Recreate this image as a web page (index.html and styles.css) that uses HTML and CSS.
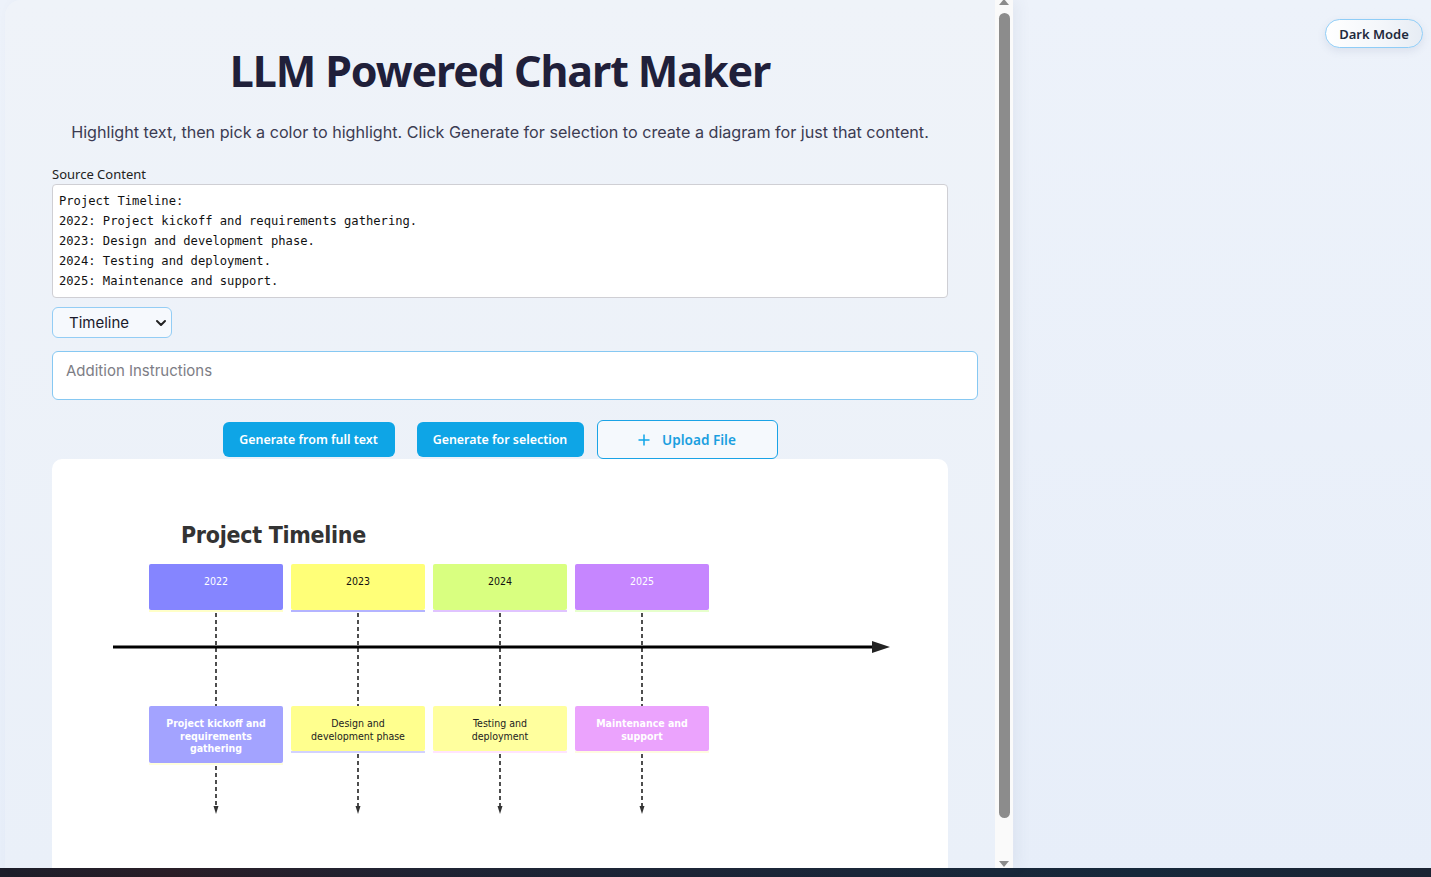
FILE: index.html
```html
<!DOCTYPE html>
<html>
<head>
<meta charset="utf-8">
<title>LLM Powered Chart Maker</title>
<link rel="stylesheet" href="styles.css">
</head>
<body>
<div class="app">
  <div class="panel">
    <main class="content">
      <h1 class="title">LLM Powered Chart Maker</h1>
      <p class="subtitle">Highlight text, then pick a color to highlight. Click Generate for selection to create a diagram for just that content.</p>
      <label class="field-label">Source Content</label>
      <div class="source">Project Timeline:
2022: Project kickoff and requirements gathering.
2023: Design and development phase.
2024: Testing and deployment.
2025: Maintenance and support.</div>
      <div class="select">
        <span>Timeline</span>
        <svg class="chev" width="12" height="8" viewBox="0 0 12 8"><path d="M2 2 L6 6 L10 2" fill="none" stroke="#222" stroke-width="2" stroke-linecap="round" stroke-linejoin="round"/></svg>
      </div>
      <div class="instructions">Addition Instructions</div>
      <div class="actions">
        <button class="btn primary btn-full">Generate from full text</button>
        <button class="btn primary btn-sel">Generate for selection</button>
        <button class="btn outline">
          <svg width="12" height="12" viewBox="0 0 12 12"><path d="M6 0.5 V11.5 M0.5 6 H11.5" stroke="#0ea5e9" stroke-width="1.5"/></svg>
          <span>Upload File</span>
        </button>
      </div>
      <section class="chart">
        <svg class="timeline" width="896" height="420" viewBox="0 0 896 420">
          <text x="129" y="84" class="t-title">Project Timeline</text>
          <!-- year boxes -->
          <rect x="97" y="151" width="134" height="2" fill="#ffffc8"/>
          <rect x="97" y="105" width="134" height="46" rx="2" fill="#8585ff"/>
          <text x="164" y="126" class="t-year light">2022</text>

          <rect x="239" y="151" width="134" height="2" fill="#b4b4ff"/>
          <rect x="239" y="105" width="134" height="46" rx="2" fill="#ffff78"/>
          <text x="306" y="126" class="t-year">2023</text>

          <rect x="381" y="151" width="134" height="2" fill="#e0c4ff"/>
          <rect x="381" y="105" width="134" height="46" rx="2" fill="#d9ff80"/>
          <text x="448" y="126" class="t-year">2024</text>

          <rect x="523" y="151" width="134" height="2" fill="#e6ffcc"/>
          <rect x="523" y="105" width="134" height="46" rx="2" fill="#c686ff"/>
          <text x="590" y="126" class="t-year light">2025</text>

          <!-- dashed lines -->
          <g stroke="#222" stroke-width="1.6" stroke-dasharray="4 3">
            <line x1="164" y1="154" x2="164" y2="247"/>
            <line x1="306" y1="154" x2="306" y2="247"/>
            <line x1="448" y1="154" x2="448" y2="247"/>
            <line x1="590" y1="154" x2="590" y2="247"/>
            <line x1="164" y1="307" x2="164" y2="349"/>
            <line x1="306" y1="295" x2="306" y2="349"/>
            <line x1="448" y1="295" x2="448" y2="349"/>
            <line x1="590" y1="295" x2="590" y2="349"/>
          </g>
          <g fill="#333">
            <path d="M161.5 347 L166.5 347 L164 355 Z"/>
            <path d="M303.5 347 L308.5 347 L306 355 Z"/>
            <path d="M445.5 347 L450.5 347 L448 355 Z"/>
            <path d="M587.5 347 L592.5 347 L590 355 Z"/>
          </g>

          <!-- axis -->
          <line x1="61" y1="188" x2="824" y2="188" stroke="#000" stroke-width="3"/>
          <path d="M820 182 L838 188 L820 194 Z" fill="#222"/>

          <!-- event boxes -->
          <rect x="97" y="304" width="134" height="2" fill="#ffffdc"/>
          <rect x="97" y="247" width="134" height="57" rx="2" fill="#a3a3ff"/>
          <text class="t-event light" x="164" y="268">Project kickoff and</text>
          <text class="t-event light" x="164" y="281">requirements</text>
          <text class="t-event light" x="164" y="293">gathering</text>

          <rect x="239" y="292" width="134" height="2" fill="#d2d2ff"/>
          <rect x="239" y="247" width="134" height="45" rx="2" fill="#ffff8e"/>
          <text class="t-event" x="306" y="268">Design and</text>
          <text class="t-event" x="306" y="281">development phase</text>

          <rect x="381" y="292" width="134" height="2" fill="#ffe4ff"/>
          <rect x="381" y="247" width="134" height="45" rx="2" fill="#ffff9e"/>
          <text class="t-event" x="448" y="268">Testing and</text>
          <text class="t-event" x="448" y="281">deployment</text>

          <rect x="523" y="292" width="134" height="2" fill="#fffbe0"/>
          <rect x="523" y="247" width="134" height="45" rx="2" fill="#eba3fd"/>
          <text class="t-event light" x="590" y="268">Maintenance and</text>
          <text class="t-event light" x="590" y="281">support</text>
        </svg>
      </section>
    </main>
    <div class="scrollbar">
      <svg class="sb-up" width="12" height="6" viewBox="0 0 12 6"><path d="M1 6 L6 0 L11 6 Z" fill="#8c8c8c"/></svg>
      <div class="thumb"></div>
      <svg class="sb-down" width="12" height="6" viewBox="0 0 12 6"><path d="M1 0 L11 0 L6 6 Z" fill="#8c8c8c"/></svg>
    </div>
  </div>
  <div class="rest"></div>
</div>
<div class="bottom-bar"></div>
<button class="dark-toggle">Dark Mode</button>
</body>
</html>
```

FILE: styles.css
```css
html, body {
  margin: 0;
  padding: 0;
}
body {
  width: 1431px;
  height: 877px;
  overflow: hidden;
  background: linear-gradient(180deg, #edf2fa 0%, #e7eef9 100%);
  font-family: "Noto Sans", "Open Sans", sans-serif;
  position: relative;
}
.app {
  display: flex;
  height: 868px;
}
.panel {
  margin-left: 5px;
  width: 1008px;
  height: 868px;
  display: flex;
  flex-shrink: 0;
  background: linear-gradient(180deg, #eff3f9 0%, #eaf0f9 100%);
  border-radius: 16px 0 0 0;
  overflow: hidden;
  box-shadow: 6px 0 14px rgba(60, 80, 120, 0.06);
}
.content {
  width: 990px;
  height: 868px;
  padding: 0 47px;
  box-sizing: border-box;
  display: flex;
  flex-direction: column;
  align-items: flex-start;
  overflow: hidden;
}
.content > * {
  flex-shrink: 0;
}
.title {
  align-self: stretch;
  text-align: center;
  margin: 43px 0 0;
  font-family: "Noto Sans", sans-serif;
  font-weight: 700;
  font-size: 43px;
  line-height: 56px;
  color: #20203a;
  letter-spacing: -1.1px;
}
.subtitle {
  align-self: stretch;
  text-align: center;
  margin: 22px 0 0;
  font-family: "Inter", sans-serif;
  font-size: 16.15px;
  line-height: 22px;
  color: #3b3b52;
}
.field-label {
  margin-top: 23px;
  font-size: 13px;
  line-height: 17px;
  color: #222;
}
.source {
  margin-top: 1px;
  width: 896px;
  height: 114px;
  box-sizing: border-box;
  border: 1px solid #cfcfd4;
  border-radius: 4px;
  background: #fff;
  padding: 6px 6px;
  font-family: "DejaVu Sans Mono", "Liberation Mono", monospace;
  font-size: 12.15px;
  line-height: 20px;
  color: #111;
  white-space: pre;
}
.select {
  margin-top: 9px;
  width: 120px;
  height: 31px;
  box-sizing: border-box;
  border: 1px solid #93cdf5;
  border-radius: 6px;
  background: #f6f9fd;
  display: flex;
  align-items: center;
  justify-content: space-between;
  padding: 0 4px 0 16px;
  font-family: "Inter", sans-serif;
  font-size: 15px;
  color: #1a1a2a;
}
.chev { margin-top: 1px; }
.instructions {
  margin-top: 13px;
  width: 926px;
  height: 49px;
  box-sizing: border-box;
  border: 1px solid #86c8f2;
  border-radius: 6px;
  background: #fff;
  padding: 9px 13px;
  font-family: "Inter", sans-serif;
  font-size: 15px;
  line-height: 20px;
  color: #7d7d85;
}
.actions {
  align-self: stretch;
  margin-top: 20px;
  display: flex;
  justify-content: center;
  align-items: center;
  height: 39px;
}
.btn {
  font-family: "Noto Sans", sans-serif;
  font-weight: 600;
  font-size: 12.4px;
  border-radius: 6px;
  cursor: pointer;
  box-sizing: border-box;
  white-space: nowrap;
  flex-shrink: 0;
}
.primary {
  height: 35px;
  background: #0ea5e6;
  color: #fff;
  border: none;
  padding: 0;
}
.btn-full { width: 172px; }
.btn-sel { width: 167px; margin-left: 22px; }
.outline {
  margin-left: 13px;
  width: 181px;
  height: 39px;
  background: #f5f9fd;
  border: 1px solid #1aa3e6;
  color: #1a9fe0;
  font-size: 13.6px;
  display: flex;
  align-items: center;
  justify-content: center;
  gap: 12px;
  padding-left: 6px;
}
.chart {
  width: 896px;
  height: 430px;
  background: #fff;
  border-radius: 10px 10px 0 0;
}
.timeline { display: block; }
.t-title {
  font-family: "DejaVu Sans Condensed", "DejaVu Sans", sans-serif;
  font-weight: 700;
  font-size: 23px;
  letter-spacing: -0.3px;
  fill: #333;
}
.t-year {
  font-family: "DejaVu Sans Condensed", "DejaVu Sans", sans-serif;
  font-size: 10.5px;
  text-anchor: middle;
  fill: #111;
}
.t-event {
  font-family: "DejaVu Sans Condensed", "DejaVu Sans", sans-serif;
  font-size: 10.5px;
  text-anchor: middle;
  fill: #222;
}
.t-event.light { fill: #fff; font-weight: 700; }
.light { fill: #fff; }
.scrollbar {
  width: 18px;
  height: 868px;
  flex-shrink: 0;
  background: #fafafa;
  display: flex;
  flex-direction: column;
  align-items: center;
}
.sb-up { margin-top: -1px; flex-shrink: 0; }
.thumb {
  margin-top: 8px;
  width: 11px;
  height: 805px;
  flex-shrink: 0;
  background: #8c8c8c;
  border-radius: 6px;
}
.sb-down { margin-top: auto; margin-bottom: 1px; flex-shrink: 0; }
.rest { flex: 1; }
.bottom-bar {
  height: 9px;
  background: linear-gradient(90deg, #1c1e2a 0%, #2a1d26 12%, #1f2333 30%, #1a2638 60%, #16283a 80%, #1b2433 100%);
}
.dark-toggle {
  position: absolute;
  top: 19px;
  right: 8px;
  width: 98px;
  height: 29px;
  border-radius: 15px;
  border: 1px solid #8fcdf7;
  background: linear-gradient(90deg, #ffffff 0%, #f3f6fa 60%, #e6ecf4 100%);
  box-shadow: 0 3px 8px rgba(80, 100, 140, 0.12);
  font-family: "Noto Sans", sans-serif;
  font-weight: 600;
  font-size: 13px;
  color: #222a3c;
}
```
